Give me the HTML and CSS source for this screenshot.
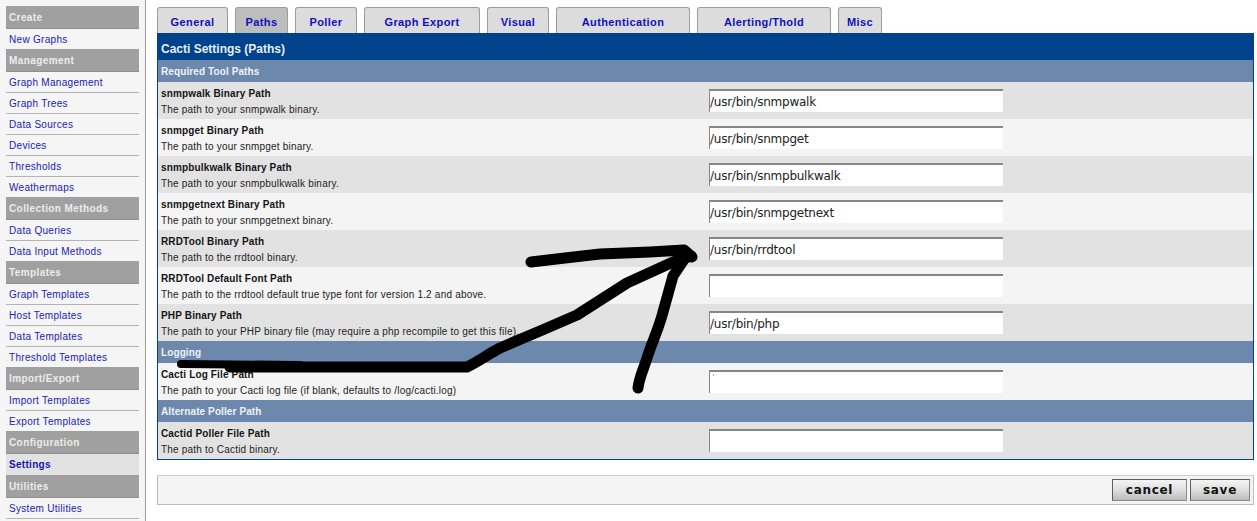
FILE: index.html
```html
<!DOCTYPE html>
<html>
<head>
    <title>Cacti Settings</title>
    <link rel="stylesheet" href="styles.css">
</head>
<body>
    <div id="page">
        <div id="sidebar">
            <div class="menu-head">Create</div>
            <a class="menu-item last" href="#">New Graphs</a>
            <div class="menu-head">Management</div>
            <a class="menu-item" href="#">Graph Management</a>
            <a class="menu-item" href="#">Graph Trees</a>
            <a class="menu-item" href="#">Data Sources</a>
            <a class="menu-item" href="#">Devices</a>
            <a class="menu-item" href="#">Thresholds</a>
            <a class="menu-item last" href="#">Weathermaps</a>
            <div class="menu-head">Collection Methods</div>
            <a class="menu-item" href="#">Data Queries</a>
            <a class="menu-item last" href="#">Data Input Methods</a>
            <div class="menu-head">Templates</div>
            <a class="menu-item" href="#">Graph Templates</a>
            <a class="menu-item" href="#">Host Templates</a>
            <a class="menu-item" href="#">Data Templates</a>
            <a class="menu-item last" href="#">Threshold Templates</a>
            <div class="menu-head">Import/Export</div>
            <a class="menu-item" href="#">Import Templates</a>
            <a class="menu-item last" href="#">Export Templates</a>
            <div class="menu-head">Configuration</div>
            <a class="menu-item last current" href="#">Settings</a>
            <div class="menu-head">Utilities</div>
            <a class="menu-item" href="#">System Utilities</a>
        </div>

        <div id="main">
            <div id="tabs">
                <a class="tab w-general" href="#">General</a>
                <a class="tab w-paths active" href="#">Paths</a>
                <a class="tab w-poller" href="#">Poller</a>
                <a class="tab w-export" href="#">Graph Export</a>
                <a class="tab w-visual" href="#">Visual</a>
                <a class="tab w-auth" href="#">Authentication</a>
                <a class="tab w-alert" href="#">Alerting/Thold</a>
                <a class="tab w-misc" href="#">Misc</a>
            </div>

            <form id="settings">
                <div class="title-bar">Cacti Settings (Paths)</div>
                <div class="section">Required Tool Paths</div>
                <div class="row dark">
                    <div class="info"><b>snmpwalk Binary Path</b><span>The path to your snmpwalk binary.</span></div>
                    <input type="text" value="/usr/bin/snmpwalk">
                </div>
                <div class="row">
                    <div class="info"><b>snmpget Binary Path</b><span>The path to your snmpget binary.</span></div>
                    <input type="text" value="/usr/bin/snmpget">
                </div>
                <div class="row dark">
                    <div class="info"><b>snmpbulkwalk Binary Path</b><span>The path to your snmpbulkwalk binary.</span></div>
                    <input type="text" value="/usr/bin/snmpbulkwalk">
                </div>
                <div class="row">
                    <div class="info"><b>snmpgetnext Binary Path</b><span>The path to your snmpgetnext binary.</span></div>
                    <input type="text" value="/usr/bin/snmpgetnext">
                </div>
                <div class="row dark">
                    <div class="info"><b>RRDTool Binary Path</b><span>The path to the rrdtool binary.</span></div>
                    <input type="text" value="/usr/bin/rrdtool">
                </div>
                <div class="row">
                    <div class="info"><b>RRDTool Default Font Path</b><span>The path to the rrdtool default true type font for version 1.2 and above.</span></div>
                    <input type="text" value="">
                </div>
                <div class="row dark">
                    <div class="info"><b>PHP Binary Path</b><span>The path to your PHP binary file (may require a php recompile to get this file).</span></div>
                    <input type="text" value="/usr/bin/php">
                </div>
                <div class="section">Logging</div>
                <div class="row">
                    <div class="info"><b>Cacti Log File Path</b><span>The path to your Cacti log file (if blank, defaults to /log/cacti.log)</span></div>
                    <input class="blanked" type="text" value="">
                </div>
                <div class="section">Alternate Poller Path</div>
                <div class="row dark">
                    <div class="info"><b>Cactid Poller File Path</b><span>The path to Cactid binary.</span></div>
                    <input type="text" value="">
                </div>
            </form>

            <div id="save-bar">
                <button type="button" class="btn-cancel">cancel</button>
                <button type="button" class="btn-save">save</button>
            </div>
        </div>
    </div>

    <!-- hand drawn arrow on top of the screenshot -->
    <svg id="scribble" width="1257" height="521" viewBox="0 0 1257 521">
        <path class="ink thin" d="M181 364 L300 365"/>
        <path class="ink" d="M230 367 L467 367 C480 361 488 354 500 348 L540 331 L577 315 L627 283 L673 262 L691 256"/>
        <path class="ink" d="M531 262 L565 258 L600 254 L650 252 L684 250 L692 257"/>
        <path class="ink" d="M638 388 C639 378 644 368 647 358 C652 342 659 328 663 312 L673 276 L685 258"/>
    </svg>
</body>
</html>
```

FILE: styles.css
```css
html, body {
    margin: 0;
    height: 100%;
    overflow: hidden;
    background-color: white;
    font-family: "Liberation Sans", Arial, sans-serif;
}

a {
    text-decoration: none;
}

#page {
    display: flex;
    height: 521px;
}

#sidebar {
    box-sizing: border-box;
    width: 146px;
    flex-shrink: 0;
    padding: 6px 6px 0;
    background-color: #f5f5f5;
    border-right: 1px solid #9a9a9a;
}

.menu-head {
    box-sizing: border-box;
    height: 23px;
    line-height: 24px;
    padding-left: 3px;
    background-color: #a0a0a0;
    border-bottom: 1px solid #8f8f8f;
    color: #ececec;
    font-size: 10px;
    font-weight: bold;
    letter-spacing: 0.4px;
}

.menu-item {
    box-sizing: border-box;
    display: block;
    height: 21px;
    line-height: 22px;
    padding-left: 3px;
    border-bottom: 1px solid #b4b4b4;
    color: #2020b8;
    font-size: 10px;
    letter-spacing: 0.3px;
}

.menu-item.last {
    height: 20px;
    border-bottom: none;
}

.menu-item.current {
    height: 21px;
    background-color: #e2e2e2;
    font-weight: bold;
    color: #1515b0;
}

#main {
    box-sizing: border-box;
    flex: 1;
    min-width: 0;
    padding: 7px 3px 0 11px;
}

#tabs {
    display: flex;
    gap: 7px;
    height: 26px;
}

.tab {
    box-sizing: border-box;
    height: 26px;
    line-height: 28px;
    text-align: center;
    background-color: #dcdcdc;
    border: 1px solid #9c9c9c;
    border-bottom: none;
    border-radius: 3px 3px 0 0;
    color: #1010c0;
    font-size: 11px;
    font-weight: bold;
    letter-spacing: 0.4px;
}

.tab.active {
    background-color: #bdbdbd;
}

.w-general { width: 71px; }
.w-paths { width: 53px; }
.w-poller { width: 62px; }
.w-export { width: 116px; }
.w-visual { width: 62px; }
.w-auth { width: 134px; }
.w-alert { width: 134px; }
.w-misc { width: 44px; }

#settings {
    box-sizing: border-box;
    margin: 0;
    border: 1px solid #00438c;
    border-top: none;
    height: 427px;
}

.title-bar {
    height: 27px;
    line-height: 32px;
    margin: 0 -1px;
    padding-left: 4px;
    background-color: #00438c;
    color: #e6edf5;
    font-size: 12px;
    font-weight: bold;
}

.section {
    height: 22px;
    line-height: 23px;
    padding-left: 3px;
    background-color: #6d88ad;
    color: #eef2f6;
    font-size: 10px;
    font-weight: bold;
    letter-spacing: 0.1px;
}

.row {
    display: flex;
    height: 37px;
    padding-left: 3px;
    background-color: #f4f4f4;
}

.row.dark {
    background-color: #e2e2e2;
}

.info {
    width: 548px;
    flex-shrink: 0;
    display: flex;
    flex-direction: column;
    padding-top: 4px;
    font-size: 10px;
    line-height: 16px;
    color: #222;
}

.info b {
    color: #151515;
    letter-spacing: 0.15px;
}

.info span {
    letter-spacing: 0.2px;
    white-space: nowrap;
}

.row input {
    box-sizing: border-box;
    width: 294px;
    height: 23px;
    margin-top: 7px;
    padding: 0;
    border: none;
    border-top: 2px solid #868686;
    border-left: 1px solid #868686;
    border-radius: 0;
    outline: none;
    background-color: white;
    color: #222;
    font-family: "DejaVu Sans", sans-serif;
    font-size: 12px;
    letter-spacing: -0.25px;
}

/* the log path was painted out in the picture, only a speck is left */
.row input.blanked {
    background: linear-gradient(#aaa, #aaa) 3px 2px / 1px 2px no-repeat white;
}

#save-bar {
    box-sizing: border-box;
    display: flex;
    justify-content: flex-end;
    align-items: center;
    gap: 3px;
    height: 30px;
    margin-top: 15px;
    padding-right: 3px;
    background-color: #f4f4f4;
    border: 1px solid #bdbdbd;
    border-top-color: #cfcfcf;
}

#save-bar button {
    box-sizing: border-box;
    height: 22px;
    padding: 0;
    background: linear-gradient(#f4f4f4, #dedede 50%, #bcbcbc);
    border: 1px solid #5e5e5e;
    border-right-color: #8a8a8a;
    border-bottom-color: #8a8a8a;
    color: #111;
    font-family: "DejaVu Sans", sans-serif;
    font-size: 12px;
    font-weight: bold;
    letter-spacing: 0.7px;
}

.btn-cancel { width: 75px; }
.btn-save { width: 60px; }

#scribble {
    position: absolute;
    left: 0;
    top: 0;
    pointer-events: none;
}

.ink {
    fill: none;
    stroke: black;
    stroke-width: 11;
    stroke-linecap: round;
    stroke-linejoin: round;
}

.ink.thin {
    stroke-width: 8;
}
```
